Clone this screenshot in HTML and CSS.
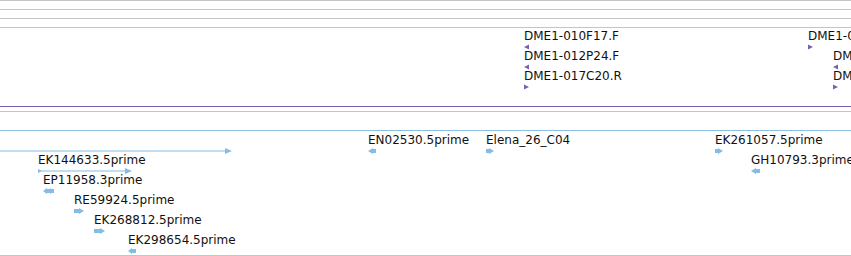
FILE: index.html
```html
<!DOCTYPE html>
<html lang="en">
<head>
    <meta charset="UTF-8">
    <title>Tracks</title>
    <link rel="stylesheet" href="styles.css">
</head>
<body>
    <div class="view">
        <div class="lane"></div>
        <div class="lane"></div>
        <div class="lane"></div>

        <!-- BAC ends -->
        <div class="track track-upper">
            <div class="feature" style="left: 524px; top: 0px;">
                <div class="label">DME1-010F17.F</div>
                <svg class="glyph purple" width="6" height="8"><polygon points="0,4 5,1.5 5,6.5"/></svg>
            </div>
            <div class="feature" style="left: 524px; top: 20px;">
                <div class="label">DME1-012P24.F</div>
                <svg class="glyph purple" width="6" height="8"><polygon points="0,4 5,1.5 5,6.5"/></svg>
            </div>
            <div class="feature" style="left: 524px; top: 40px;">
                <div class="label">DME1-017C20.R</div>
                <svg class="glyph purple" width="6" height="8"><polygon points="0,1.5 5,4 0,6.5"/></svg>
            </div>
            <div class="feature" style="left: 808px; top: 0px;">
                <div class="label">DME1-019H03.R</div>
                <svg class="glyph purple" width="6" height="8"><polygon points="0,1.5 5,4 0,6.5"/></svg>
            </div>
            <div class="feature" style="left: 833px; top: 20px;">
                <div class="label">DME1-021B07.F</div>
                <svg class="glyph purple" width="6" height="8"><polygon points="0,4 5,1.5 5,6.5"/></svg>
            </div>
            <div class="feature" style="left: 833px; top: 40px;">
                <div class="label">DME1-021B07.R</div>
                <svg class="glyph purple" width="6" height="8"><polygon points="0,1.5 5,4 0,6.5"/></svg>
            </div>
        </div>

        <div class="gap"></div>
        <div class="gap gap-blue"></div>

        <!-- ESTs -->
        <div class="track track-lower">
            <div class="feature" style="left: 0px; top: 0px;">
                <div class="label"></div>
                <svg class="glyph blue" width="233" height="8"><rect x="0" y="3.5" width="226" height="1"/><polygon points="225,1 232,4 225,7"/></svg>
            </div>
            <div class="feature" style="left: 368px; top: 0px;">
                <div class="label">EN02530.5prime</div>
                <svg class="glyph blue" width="9" height="8"><polygon points="0,4 5,1 5,2 8,2 8,6 5,6 5,7"/></svg>
            </div>
            <div class="feature" style="left: 486px; top: 0px;">
                <div class="label">Elena_26_C04</div>
                <svg class="glyph blue" width="9" height="8"><polygon points="0,2 3,2 3,1 8,4 3,7 3,6 0,6"/></svg>
            </div>
            <div class="feature" style="left: 715px; top: 0px;">
                <div class="label">EK261057.5prime</div>
                <svg class="glyph blue" width="9" height="8"><polygon points="0,2 3,2 3,1 8,4 3,7 3,6 0,6"/></svg>
            </div>
            <div class="feature" style="left: 38px; top: 20px;">
                <div class="label">EK144633.5prime</div>
                <svg class="glyph blue" width="95" height="8"><polygon points="0,2 4,4 0,6"/><rect x="0" y="3.5" width="88" height="1"/><polygon points="87,1 94,4 87,7"/></svg>
            </div>
            <div class="feature" style="left: 751px; top: 20px;">
                <div class="label">GH10793.3prime</div>
                <svg class="glyph blue" width="10" height="8"><polygon points="0,4 5,1 5,2 9,2 9,6 5,6 5,7"/></svg>
            </div>
            <div class="feature" style="left: 43px; top: 40px;">
                <div class="label">EP11958.3prime</div>
                <svg class="glyph blue" width="12" height="8"><polygon points="0,4 4,1 4,2 11,2 11,6 4,6 4,7"/><polygon points="4,4 8,1 8,7"/></svg>
            </div>
            <div class="feature" style="left: 74px; top: 60px;">
                <div class="label">RE59924.5prime</div>
                <svg class="glyph blue" width="11" height="8"><polygon points="0,2 5,2 5,1 10,4 5,7 5,6 0,6"/></svg>
            </div>
            <div class="feature" style="left: 94px; top: 80px;">
                <div class="label">EK268812.5prime</div>
                <svg class="glyph blue" width="12" height="8"><polygon points="0,2 6,2 6,1 11,4 6,7 6,6 0,6"/></svg>
            </div>
            <div class="feature" style="left: 128px; top: 100px;">
                <div class="label">EK298654.5prime</div>
                <svg class="glyph blue" width="9" height="8"><polygon points="0,4 4,1 4,2 8,2 8,6 4,6 4,7"/></svg>
            </div>
        </div>
    </div>
</body>
</html>
```

FILE: styles.css
```css
/* track view */
body {
    margin: 0;
    background-color: #fff;
    font-family: "DejaVu Sans", sans-serif;
    overflow: hidden;
}

.view {
    width: 851px;
    height: 256px;
    overflow: hidden;
}

.lane {
    height: 8px;
    border-top: 1px solid #c4c4c4;
}

.track {
    position: relative;
    overflow: hidden;
}

.track-upper {
    height: 78px;
    border-top: 1px solid #c4c4c4;
    border-bottom: 1px solid #7a5fb0;
}

.track-upper .feature {
    margin-top: 1px;
}

.gap {
    height: 4px;
    border-bottom: 1px solid #c4c4c4;
}

.gap-blue {
    height: 18px;
    border-bottom-color: #8bbfe3;
}

.track-lower {
    height: 124px;
    border-bottom: 1px solid #c4c4c4;
}

.track-lower .feature {
    margin-top: 2px;
}

.feature {
    position: absolute;
    height: 22px;
}

.label {
    height: 14px;
    line-height: 14px;
    font-size: 12px;
    color: #111;
    white-space: nowrap;
}

.glyph {
    display: block;
}

.purple {
    fill: #7b5fb4;
}

.blue {
    fill: #86bbe3;
}
```
